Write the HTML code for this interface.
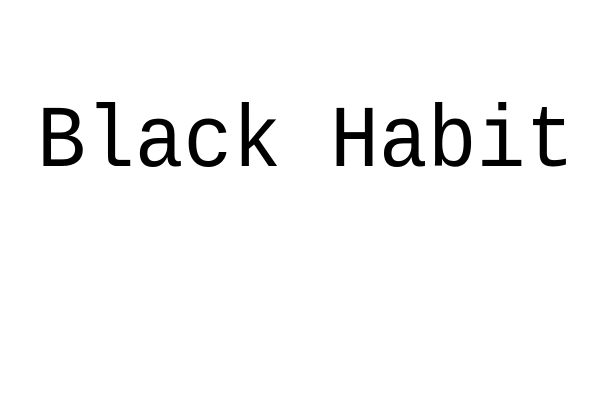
<!DOCTYPE html>
<html><head><style>
html,body{margin:0;padding:0;background:#fff;width:600px;height:400px;overflow:hidden}
.t{position:absolute;left:37px;top:100px;font-family:"Liberation Mono",monospace;font-size:88px;line-height:1;color:#000;white-space:pre;transform:scaleX(0.925);transform-origin:0 0}
</style></head><body>
<div class="t">Black Habit</div>
</body></html>
